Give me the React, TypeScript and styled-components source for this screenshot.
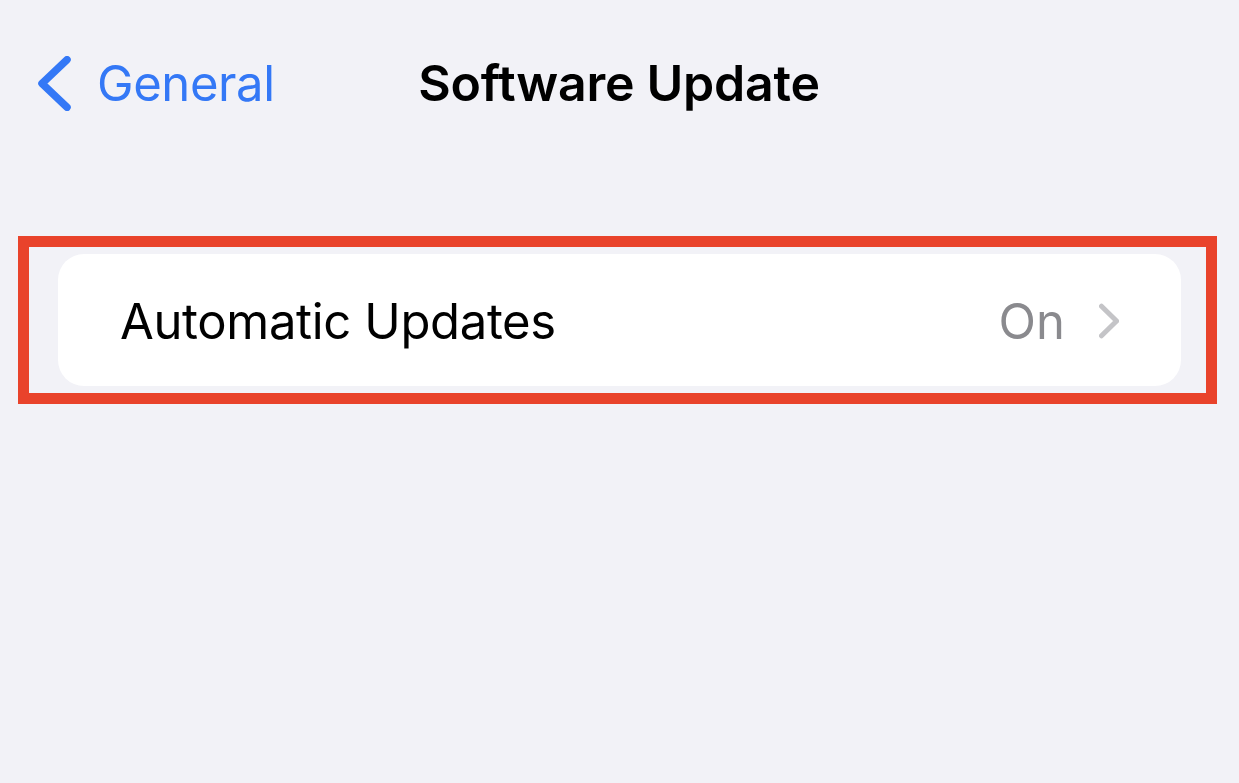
import React from "react";
import styled, { createGlobalStyle } from "styled-components";

const GlobalStyle = createGlobalStyle`
  html, body {
    margin: 0;
    padding: 0;
    background: #f2f2f7;
  }
  body {
    font-family: Inter, "Noto Sans", "Liberation Sans", sans-serif;
    -webkit-font-smoothing: antialiased;
  }
`;

const App = () => {
  return (
    <>
      <GlobalStyle />
      <Page>
        <NavBar>
          <BackButton>
            <BackChevron width="35" height="55" viewBox="0 0 35 55">
              <path d="M30 3.7 L5 27.5 L30 51.3" />
            </BackChevron>
            <BackLabel>General</BackLabel>
          </BackButton>
          <Title>Software Update</Title>
          <span />
        </NavBar>

        <Highlight>
          <Card>
            <RowLabel>Automatic Updates</RowLabel>
            <RowValue>On</RowValue>
            <Disclosure width="20" height="36" viewBox="0 0 20 36">
              <path d="M2.5 3.2 L17.6 18 L2.5 32.8" />
            </Disclosure>
          </Card>
        </Highlight>
      </Page>
    </>
  );
};

const Page = styled.div`
  min-height: 100vh;
  display: flex;
  flex-direction: column;
`;

const NavBar = styled.header`
  height: 166px;
  display: grid;
  grid-template-columns: 1fr auto 1fr;
  align-items: center;
  padding: 0 0 0 37px;
`;

const BackButton = styled.button`
  display: flex;
  align-items: center;
  gap: 25px;
  border: none;
  background: none;
  padding: 0;
  font: inherit;
  color: #3478f6;
  cursor: pointer;
  justify-self: start;
`;

const BackChevron = styled.svg`
  display: block;
  fill: none;
  stroke: #3478f6;
  stroke-width: 7.5;
  stroke-linecap: round;
  stroke-linejoin: round;
`;

const BackLabel = styled.span`
  font-size: 49px;
  font-weight: 400;
  letter-spacing: -0.4px;
`;

const Title = styled.h1`
  margin: 0;
  font-size: 50px;
  font-weight: 600;
  color: #000;
  letter-spacing: -0.25px;
  transform: translateX(-19px);
`;

const Highlight = styled.div`
  margin: 70px 22px 0 18px;
  border: 11px solid #e9432b;
  padding: 7px 25px 7px 29px;
`;

const Card = styled.div`
  height: 132px;
  background: #ffffff;
  border-radius: 26px;
  display: flex;
  align-items: center;
  padding: 2px 62px 0 62px;
  box-sizing: border-box;
`;

const RowLabel = styled.span`
  flex: 1;
  font-size: 49px;
  color: #000;
  letter-spacing: -0.35px;
`;

const RowValue = styled.span`
  font-size: 49px;
  color: #8a8a8e;
  margin-right: 34px;
`;

const Disclosure = styled.svg`
  display: block;
  fill: none;
  stroke: #c4c4c7;
  stroke-width: 5;
  stroke-linecap: round;
  stroke-linejoin: round;
`;

export default App;
